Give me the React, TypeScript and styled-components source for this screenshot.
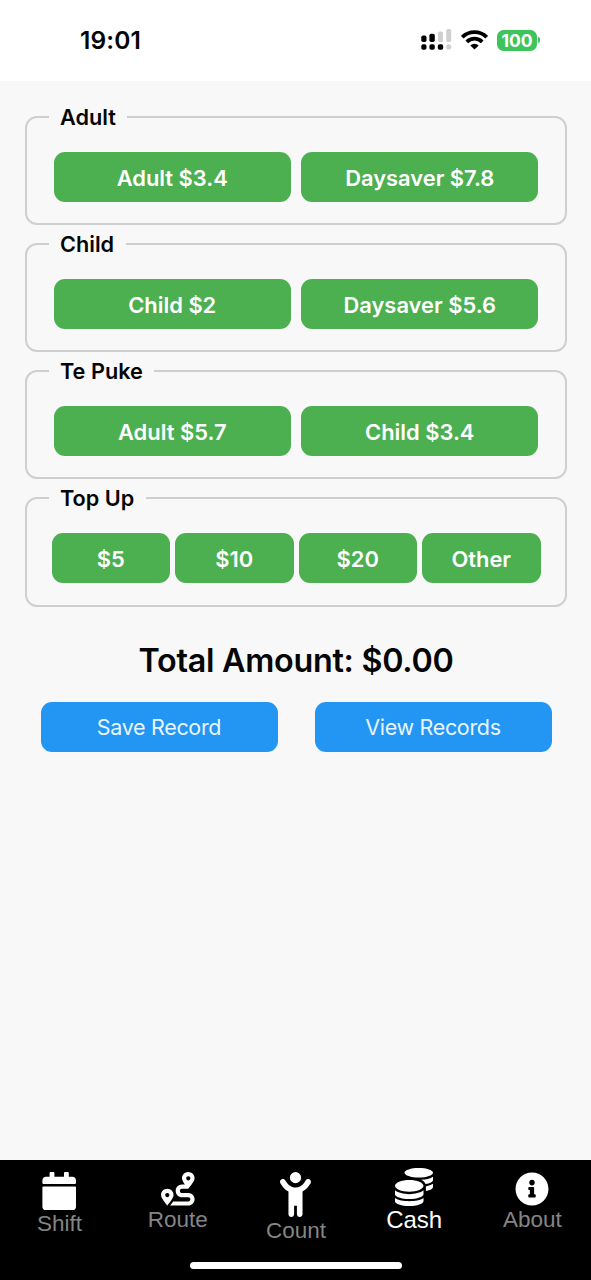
import React from "react";
import styled, { createGlobalStyle } from "styled-components";
import { FaCalendar, FaCoins, FaRoute, FaInfoCircle } from "react-icons/fa";
import { FaChildReaching } from "react-icons/fa6";

const Global = createGlobalStyle`
  body { margin: 0; background: #f8f8f8; }
  * { box-sizing: border-box; }
`;
const Screen = styled.div`
  width: 591px;
  height: 1280px;
  display: flex;
  flex-direction: column;
  overflow: hidden;
  background: #f8f8f8;
  color: #050505;
  font-family: Inter, "Liberation Sans", sans-serif;
`;
const StatusBar = styled.header`
  height: 81px;
  background: #fff;
  display: flex;
  justify-content: space-between;
  align-items: flex-start;
  padding: 25px 51px 0 80px;
`;
const Clock = styled.time`
  font-size: 24.5px;
  line-height: 31px;
  font-weight: 600;
  letter-spacing: 0.1px;
`;
const StatusIcons = styled.div`
  display: flex;
  align-items: center;
  height: 30px;
`;
const Battery = styled.div`
  display: flex;
  align-items: center;
  margin-left: 9px;
`;
const BatteryBody = styled.span`
  width: 40px;
  height: 21px;
  border-radius: 6.5px;
  background: #3fc45c;
  color: #fff;
  font-size: 17.5px;
  font-weight: 700;
  line-height: 21px;
  text-align: center;
`;
const BatteryTip = styled.span`
  width: 2px;
  height: 6px;
  margin-left: 1px;
  border-radius: 0 2px 2px 0;
  background: #3fc45c;
`;
const Main = styled.main`
  flex: 1;
  padding: 25px 24px 0 25px;
`;
const Group = styled.fieldset`
  height: 119.3px;
  margin: 0 0 7.8px;
  padding: 24px 0 0;
  border: 2px solid #cfcfcf;
  border-radius: 12px;
  min-width: 0;
`;
const Legend = styled.legend`
  height: 22px;
  margin-left: 22px;
  padding: 0 11.5px 0 11px;
  font-size: 21.7px;
  line-height: 23px;
  font-weight: 600;
`;
const Row = styled.div<{ $gap: number; $mt?: number }>`
  display: flex;
  justify-content: center;
  gap: ${(p) => p.$gap}px;
  margin-top: ${(p) => p.$mt ?? 0}px;
`;
const Button = styled.button<{ $w?: number; $plain?: boolean }>`
  width: ${(p) => p.$w ?? 237}px;
  height: 50px;
  padding: 1px 0 0;
  border: 0;
  border-radius: 11px;
  background: ${(p) => (p.$plain ? "#2396f3" : "#4caf50")};
  color: ${(p) => (p.$plain ? "#e9f5ff" : "#fff")};
  font-family: inherit;
  font-size: ${(p) => (p.$plain ? 21.5 : 21.9)}px;
  font-weight: ${(p) => (p.$plain ? 400 : 600)};
  letter-spacing: ${(p) => (p.$plain ? -0.33 : 0)}px;
`;
const Total = styled.h1`
  margin: 34px 0 0;
  font-size: 32.3px;
  line-height: 40px;
  font-weight: 600;
  letter-spacing: -0.28px;
  text-align: center;
`;
const Footer = styled.footer`
  height: 120px;
  background: #000;
  display: flex;
  flex-direction: column;
  justify-content: space-between;
  align-items: center;
  padding-bottom: 11px;
`;
const Tabs = styled.nav`
  width: 100%;
  display: grid;
  grid-template-columns: repeat(5, 1fr);
`;
const Tab = styled.a<{ $active?: boolean }>`
  display: flex;
  flex-direction: column;
  align-items: center;
  padding: ${(p) => (p.$active ? 8 : 12)}px 0 0 1px;
  color: ${(p) => (p.$active ? "#fff" : "#858585")};
  font-family: "Liberation Sans", Arial, sans-serif;
  font-size: ${(p) => (p.$active ? 24 : 22.5)}px;
  line-height: 28px;
  svg { color: #fff; display: block; }
`;
const HomeIndicator = styled.div`
  width: 212px;
  height: 7px;
  border-radius: 4px;
  background: #fff;
`;

const Signal = () => (
  <svg width="32" height="22" viewBox="0 0 32 22">
    <g fill="#000">
      <rect x="0.3" y="6.5" width="5.2" height="6.5" rx="1.8" />
      <rect x="8.4" y="4.8" width="5.4" height="8.2" rx="1.8" />
      <rect x="0.3" y="15.2" width="5.2" height="5.6" rx="1.8" />
      <rect x="8.4" y="15.2" width="5.4" height="5.6" rx="1.8" />
      <rect x="16.8" y="15.2" width="5.4" height="5.6" rx="1.8" />
    </g>
    <g fill="#d0d0d0">
      <rect x="17" y="2.5" width="5" height="10.5" rx="1.6" />
      <rect x="25.2" y="0" width="5" height="13" rx="1.6" />
      <rect x="25.2" y="15.4" width="5" height="5.2" rx="1.8" />
    </g>
  </svg>
);
const WifiSvg = styled.svg`
  margin-left: 8px;
`;
const Wifi = () => (
  <WifiSvg width="27" height="20" viewBox="0 0 27 20">
    <g fill="none" stroke="#000" strokeWidth="3.8">
      <path d="M1.3 7.2a17.3 17.3 0 0 1 24.4 0" />
      <path d="M5.8 11.9a10.9 10.9 0 0 1 15.4 0" />
    </g>
    <path d="M13.5 19.6l-4.2-4.1a5.9 5.9 0 0 1 8.4 0z" fill="#000" />
  </WifiSvg>
);

const groups = [
  { name: "Adult", items: ["Adult $3.4", "Daysaver $7.8"] },
  { name: "Child", items: ["Child $2", "Daysaver $5.6"] },
  { name: "Te Puke", items: ["Adult $5.7", "Child $3.4"] },
  { name: "Top Up", items: ["$5", "$10", "$20", "Other"] },
];

export default function App() {
  return (
    <Screen>
      <Global />
      <StatusBar>
        <Clock>19:01</Clock>
        <StatusIcons>
          <Signal />
          <Wifi />
          <Battery><BatteryBody>100</BatteryBody><BatteryTip /></Battery>
        </StatusIcons>
      </StatusBar>
      <Main>
        {groups.map((g) => (
          <Group key={g.name}>
            <Legend>{g.name}</Legend>
            <Row $gap={g.items.length > 2 ? 5 : 10.5}>
              {g.items.map((t) => (
                <Button key={t} $w={g.items.length > 2 ? 118.5 : 237}>{t}</Button>
              ))}
            </Row>
          </Group>
        ))}
        <Total>Total Amount: $0.00</Total>
        <Row $gap={37} $mt={21}>
          <Button $plain>Save Record</Button>
          <Button $plain>View Records</Button>
        </Row>
      </Main>
      <Footer>
        <Tabs>
          <Tab><FaCalendar size={38.4} />Shift</Tab>
          <Tab><FaRoute size={33.6} />Route</Tab>
          <Tab><FaChildReaching size={45} />Count</Tab>
          <Tab $active><FaCoins size={38} />Cash</Tab>
          <Tab><FaInfoCircle size={34} />About</Tab>
        </Tabs>
        <HomeIndicator />
      </Footer>
    </Screen>
  );
}
